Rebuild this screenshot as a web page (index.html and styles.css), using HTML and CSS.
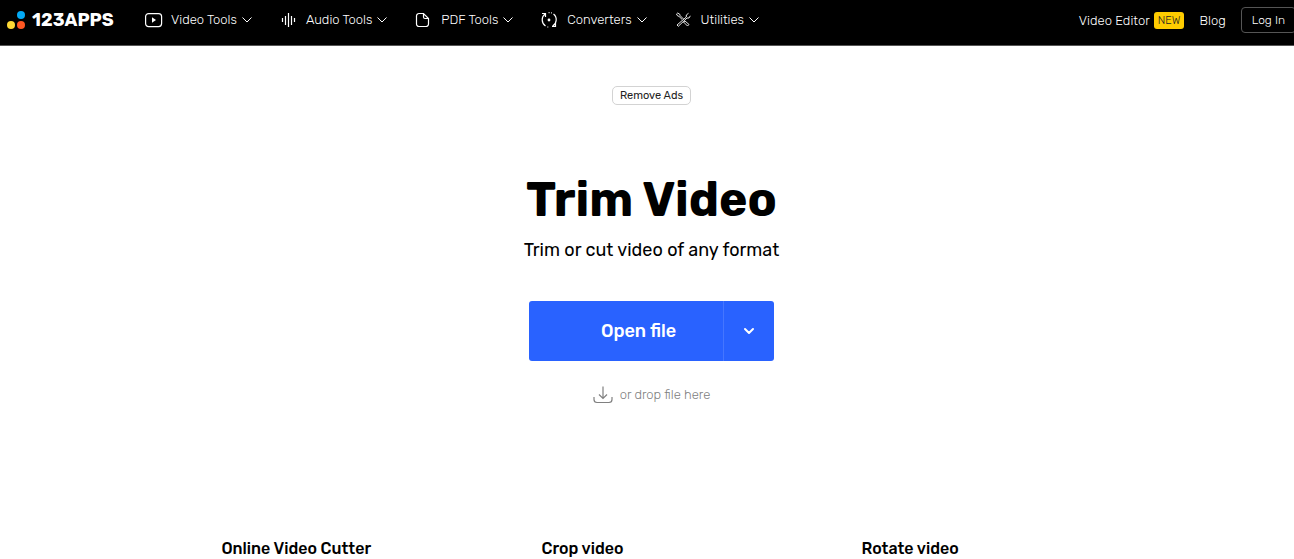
FILE: index.html
```html
<!DOCTYPE html>
<html lang="en">
<head>
    <meta charset="UTF-8">
    <meta name="viewport" content="width=device-width, initial-scale=1.0">
    <title>Trim Video - 123APPS</title>
    <link rel="stylesheet" href="styles.css">
</head>
<body>
    <header class="header">
        <a href="#" class="logo">
            <svg width="20" height="20" viewBox="0 0 20 20" aria-hidden="true">
                <circle cx="14" cy="5" r="4" fill="#03a9f4"/>
                <circle cx="4" cy="15" r="4" fill="#fdd835"/>
                <circle cx="14" cy="15" r="4" fill="#ff5722"/>
            </svg>
            <span>123APPS</span>
        </a>

        <nav class="nav">
            <button type="button" class="nav-item">
                <svg class="icon" viewBox="0 0 18 18" aria-hidden="true">
                    <rect x="0.6" y="2.6" width="16" height="13" rx="3"/>
                    <path d="M7 6.3v5.4l4-2.7z" fill="#fff" stroke="none"/>
                </svg>
                Video Tools
                <svg class="chevron" viewBox="0 0 10 6" aria-hidden="true"><path d="M0.5 0.5L5 5l4.500-4.500"/></svg>
            </button>
            <button type="button" class="nav-item">
                <svg class="icon" viewBox="0 0 18 18" aria-hidden="true">
                    <path d="M2.500 7v4M5.500 5v9M8.500 2v14M11.500 5v9M14.500 7v4"/>
                </svg>
                Audio Tools
                <svg class="chevron" viewBox="0 0 10 6" aria-hidden="true"><path d="M0.5 0.5L5 5l4.500-4.500"/></svg>
            </button>
            <button type="button" class="nav-item">
                <svg class="icon" viewBox="0 0 18 18" aria-hidden="true">
                    <path d="M8.500 2.500H4a2.500 2.500 0 0 0-2.500 2.500v8A2.500 2.500 0 0 0 4 15.500h7a2.500 2.500 0 0 0 2.500-2.500V7.500zM8.500 2.500v3.500a1.500 1.500 0 0 0 1.500 1.500h3.500"/>
                </svg>
                PDF Tools
                <svg class="chevron" viewBox="0 0 10 6" aria-hidden="true"><path d="M0.5 0.5L5 5l4.500-4.500"/></svg>
            </button>
            <button type="button" class="nav-item">
                <svg class="icon" viewBox="0 0 18 18" aria-hidden="true">
                    <path d="M1 2.500h3.500V6M4.300 2.700C0 6 .3 12 4.500 15M14.500 12v3.500H11M11.500 15.200C16 12.500 16.500 6 12.500 3"/>
                    <path d="M7.500 1.700h1.200M10 1.900h1M6.300 16h1" stroke-width="1"/>
                    <circle cx="8" cy="9" r="1.400" fill="#fff" stroke="none"/>
                </svg>
                Converters
                <svg class="chevron" viewBox="0 0 10 6" aria-hidden="true"><path d="M0.5 0.5L5 5l4.500-4.500"/></svg>
            </button>
            <button type="button" class="nav-item">
                <svg class="icon" viewBox="0 0 18 18" aria-hidden="true">
                    <path d="M1.500 3l1.200-1 2 1.200.5 1.500L8.500 8M1.500 3l1 1.800 1.500.6L7.200 8.500M10 10l4 3.500-1.500 1.500-4-4z" stroke-width="0.9"/>
                    <path d="M13.500 2.300L11.300 4v2L2 14l1.300 1.300L12 7h2l1.300-2.200" stroke-width="0.9"/>
                </svg>
                Utilities
                <svg class="chevron" viewBox="0 0 10 6" aria-hidden="true"><path d="M0.5 0.5L5 5l4.500-4.500"/></svg>
            </button>
        </nav>

        <div class="account">
            <a href="#" class="account-link">Video Editor <span class="badge">NEW</span></a>
            <a href="#" class="account-link">Blog</a>
            <button type="button" class="login">Log In</button>
        </div>
    </header>

    <main class="main">
        <button type="button" class="remove-ads">Remove Ads</button>
        <h1>Trim Video</h1>
        <p class="subtitle">Trim or cut video of any format</p>

        <div class="open-file">
            <button type="button" class="open-button">Open file</button>
            <button type="button" class="open-more" aria-label="More sources">
                <svg width="12" height="8" viewBox="0 0 12 8" aria-hidden="true">
                    <path d="M2 2l4 4 4-4" fill="none" stroke="#fff" stroke-width="2" stroke-linecap="round" stroke-linejoin="round"/>
                </svg>
            </button>
        </div>

        <div class="drop-hint">
            <svg width="20" height="18" viewBox="0 0 20 18" aria-hidden="true">
                <path d="M10 0.500V12M6 8.500l4 4 4-4M1 11v2.500a3 3 0 0 0 3 3h12a3 3 0 0 0 3-3V11" fill="none" stroke="#808080" stroke-width="1.200"/>
            </svg>
            or drop file here
        </div>

        <section class="features">
            <h2>Online Video Cutter</h2>
            <h2>Crop video</h2>
            <h2>Rotate video</h2>
        </section>
    </main>
</body>
</html>
```
FILE: styles.css
```css
* {
    box-sizing: border-box;
}

body {
    margin: 0;
    overflow-x: hidden;
    background: #fff;
    color: #000;
    font-family: Rubik, Roboto, sans-serif;
}

button {
    margin: 0;
    padding: 0;
    border: none;
    background: none;
    font-family: inherit;
    cursor: pointer;
}

a {
    color: inherit;
    text-decoration: none;
}

.header {
    display: flex;
    align-items: center;
    height: 46px;
    padding: 0 0 5px 7px;
    margin-right: -2px;
    background: #000;
    border-bottom: 1px solid #555;
    color: #fff;
    white-space: nowrap;
}

.logo {
    display: flex;
    align-items: center;
    gap: 5px;
    width: 138px;
    font-size: 18px;
    font-weight: 700;
}

.nav {
    display: flex;
    gap: 28px;
}

.nav-item {
    display: flex;
    align-items: center;
    gap: 8px;
    color: #fff;
    font-size: 13px;
    font-weight: 300;
    line-height: 20px;
}

.icon {
    width: 18px;
    height: 18px;
    fill: none;
    stroke: #fff;
    stroke-width: 1.2;
}

.chevron {
    width: 10px;
    height: 6px;
    margin-left: -3px;
    fill: none;
    stroke: #fff;
}

.account {
    display: flex;
    align-items: center;
    gap: 15px;
    margin-left: auto;
    font-size: 13px;
    font-weight: 300;
}

.account-link {
    display: flex;
    align-items: center;
    gap: 4px;
}

.badge {
    padding: 0 4px;
    border-radius: 3px;
    background: #ffcc00;
    color: #222;
    font-size: 11px;
    line-height: 17px;
}

.login {
    height: 26px;
    padding: 0 10px;
    border: 1px solid #555;
    border-radius: 4px;
    color: #fff;
    font-size: 12px;
    font-weight: 300;
}

.main {
    display: flex;
    flex-direction: column;
    align-items: center;
    padding: 40px 0 0 9px;
}

.remove-ads {
    height: 19px;
    padding: 0 7px;
    border: 1px solid #d3d3d3;
    border-radius: 5px;
    background: #fff;
    color: #222;
    font-size: 11px;
}

h1 {
    margin: 65px 0 0;
    font-size: 48px;
    font-weight: 700;
    line-height: 60px;
}

.subtitle {
    margin: 8px 0 0;
    font-size: 18px;
    line-height: 24px;
}

.open-file {
    display: flex;
    height: 60px;
    margin-top: 39px;
    border-radius: 3px;
    background: #2962ff;
    overflow: hidden;
}

.open-button {
    padding: 0 47px 0 72px;
    color: #fff;
    font-size: 18px;
    font-weight: 500;
}

.open-more {
    display: flex;
    align-items: center;
    justify-content: center;
    width: 51px;
    border-left: 1px solid #4576ff;
}

.drop-hint {
    display: flex;
    align-items: center;
    gap: 7px;
    margin-top: 24px;
    color: #808080;
    font-size: 13px;
    font-weight: 300;
    line-height: 20px;
}

.features {
    display: grid;
    grid-template-columns: repeat(3, 1fr);
    gap: 100px;
    width: 100%;
    max-width: 860px;
    margin-top: 134px;
}

.features h2 {
    margin: 0;
    font-size: 16px;
    font-weight: 500;
    line-height: 20px;
}
```
